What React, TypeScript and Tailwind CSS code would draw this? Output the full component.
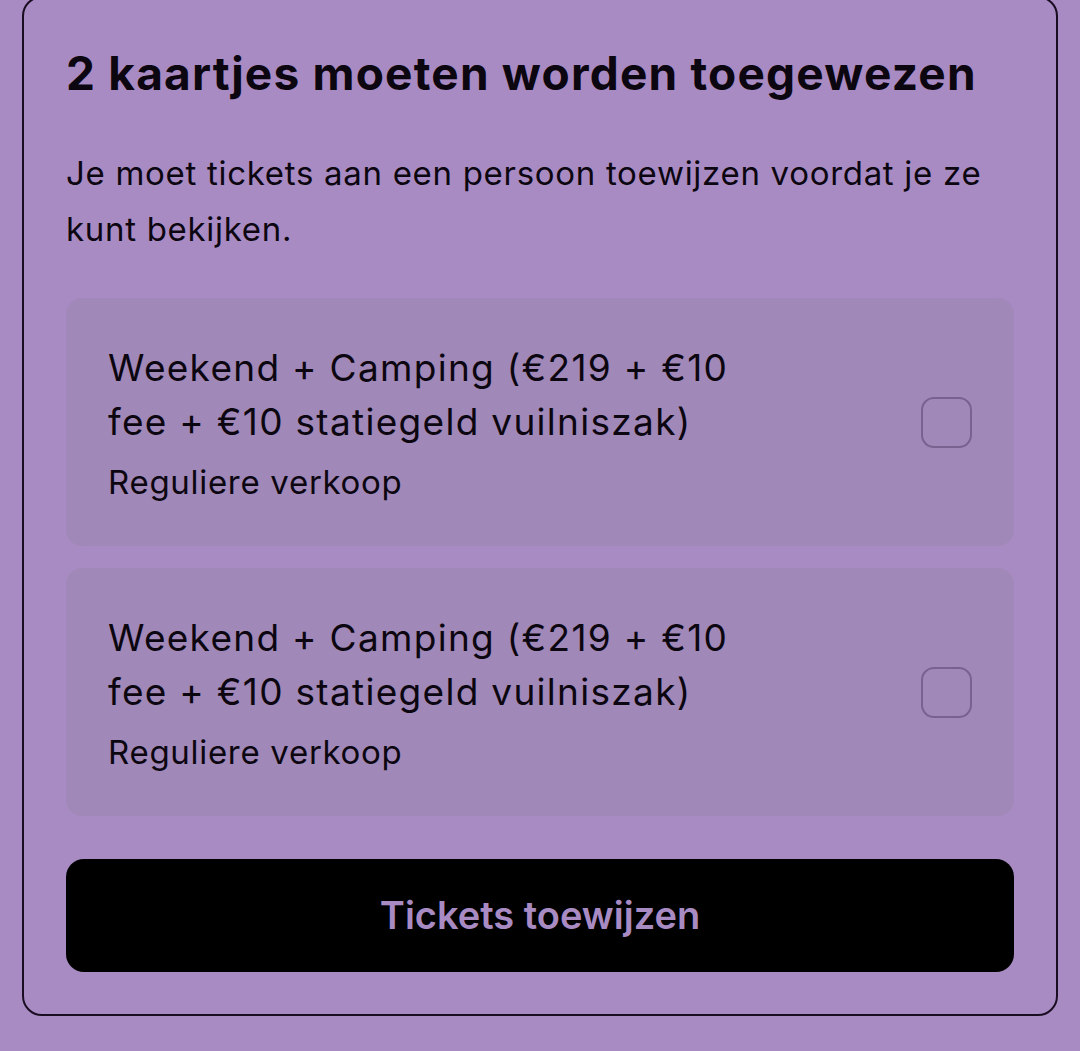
import React from "react";

function Item() {
  return (
    <div className="flex items-center justify-between rounded-[16px] bg-[#a088b8] pl-[42px] pr-[42px] pt-[43px] pb-[42px]">
      <div className="flex flex-col">
        <div className="max-w-[675px] text-[37px] leading-[54px] tracking-[1.3px] text-[#0c0610]">
          Weekend + Camping (€219 + €10 fee + €10 statiegeld vuilniszak)
        </div>
        <div className="mt-[11px] text-[33px] leading-[44px] tracking-[0.7px] text-[#0c0610]">Reguliere verkoop</div>
      </div>
      <div className="h-[51px] w-[51px] shrink-0 rounded-[13px] border-2 border-[#7a6290]" />
    </div>
  );
}

export default function App() {
  return (
    <div
      className="h-[1051px] w-[1080px] overflow-hidden bg-[#a98bc4]"
      style={{ fontFamily: "Inter, 'Noto Sans', sans-serif" }}
    >
      <div className="-mt-[4px] ml-[22px] w-[1036px] rounded-[20px] border-2 border-[#1a0d22] px-[42px] pt-[49px] pb-[42px]">
        <h1 className="text-[46px] font-bold leading-[52px] tracking-[1.2px] text-[#0c0610]">
          2 kaartjes moeten worden toegewezen
        </h1>
        <p className="mt-[46px] text-[33px] leading-[56px] tracking-[0.7px] text-[#0c0610]">
          Je moet tickets aan een persoon toewijzen voordat je ze kunt bekijken.
        </p>
        <div className="mt-[41px] flex flex-col gap-[22px]">
          <Item />
          <Item />
        </div>
        <button className="mt-[43px] flex h-[113px] w-full items-center justify-center rounded-[18px] bg-black text-[38px] font-semibold tracking-[0px] text-[#a98bc4]">
          Tickets toewijzen
        </button>
      </div>
    </div>
  );
}
